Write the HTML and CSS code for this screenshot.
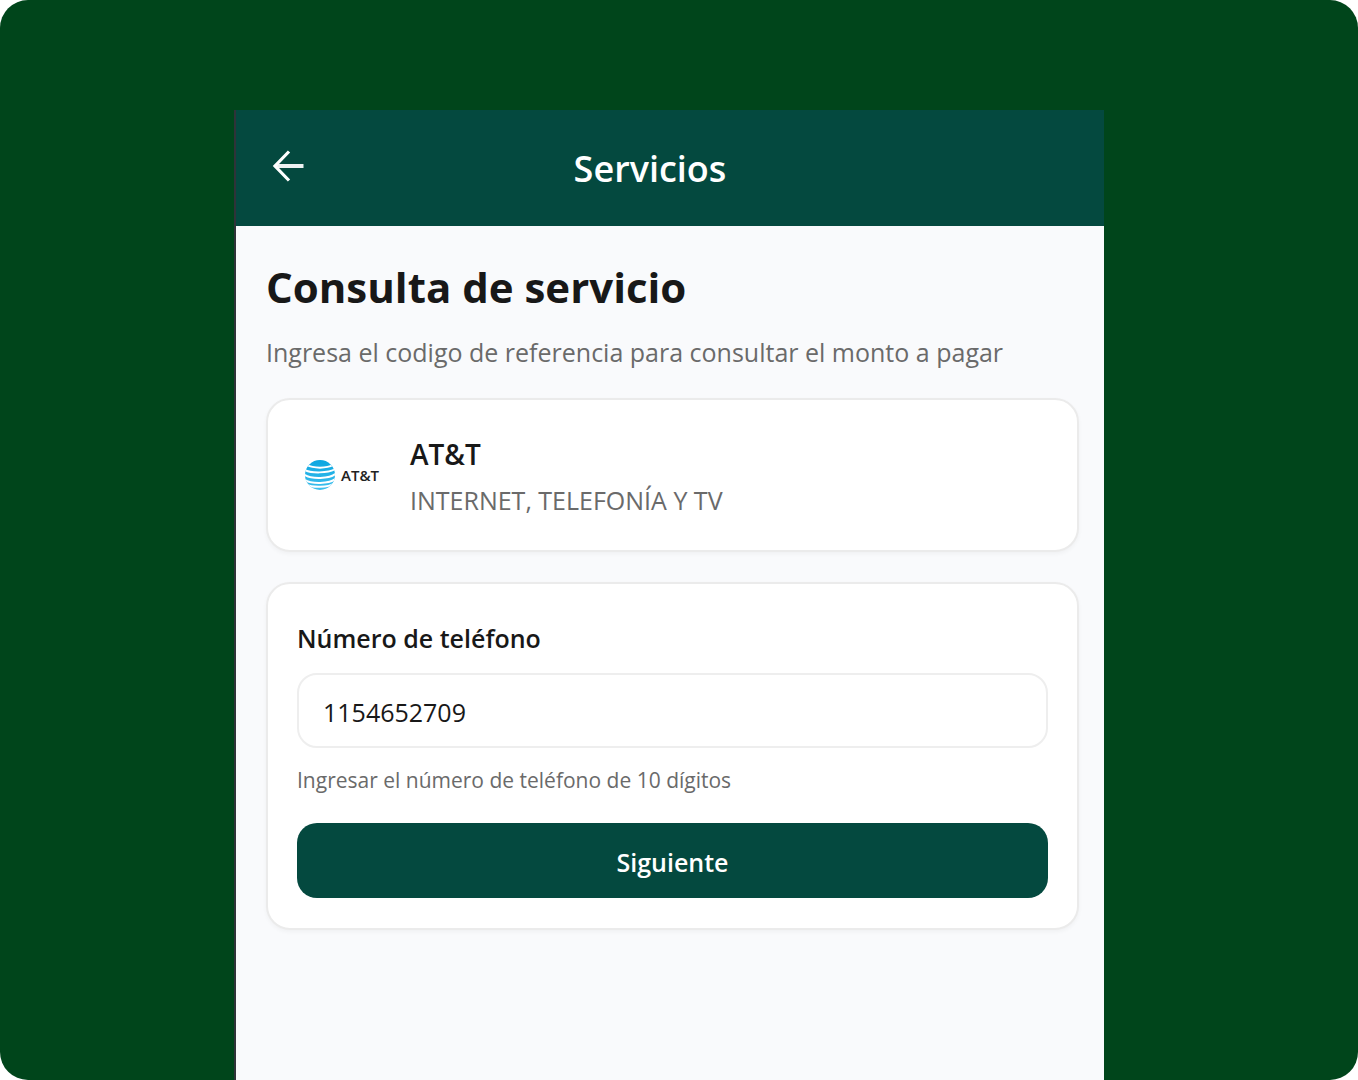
FILE: index.html
```
<!DOCTYPE html>
<html lang="es">
  <head>
    <meta charset="UTF-8" />
    <meta name="viewport" content="width=device-width, initial-scale=1.0" />
    <title>Servicios</title>
    <link rel="stylesheet" href="styles.css">
  </head>
  <body>
    <div class="stage">
      <div class="phone">
        <header class="topbar">
          <button type="button" class="back" aria-label="Volver">
            <svg width="32" height="32" viewBox="0 0 32 32" fill="none" stroke="#fff" stroke-width="3.200">
              <path d="M31.500 16H3" stroke-width="4" stroke="#edf2f2" />
              <path d="M17 1.500L3 16l14 14.500" />
            </svg>
          </button>
          <h1 class="topbar-title">Servicios</h1>
        </header>

        <main class="content">
          <h2 class="title">Consulta de servicio</h2>
          <p class="subtitle">Ingresa el codigo de referencia para consultar el monto a pagar</p>

          <section class="card company">
            <div class="logo">
              <svg width="30" height="30" viewBox="0 0 30 30" aria-hidden="true">
                <defs>
                  <linearGradient id="globe" x1="0" y1="0" x2="0" y2="1">
                    <stop offset="0" stop-color="#0aa5e0" />
                    <stop offset="1" stop-color="#3fc0ee" />
                  </linearGradient>
                  <clipPath id="round"><circle cx="15" cy="15" r="15" /></clipPath>
                </defs>
                <g clip-path="url(#round)">
                  <rect width="30" height="30" fill="url(#globe)" />
                  <g fill="none" stroke="#fff" stroke-width="2">
                    <path d="M2 5c6 3.500 20 3.500 26 0" />
                    <path d="M-1 9.500c6 4 25 4 32-1" />
                    <path d="M-1 14.500c7 5 26 4.500 32-1" />
                    <path d="M-1 19.500c7 5 26 4.500 32-1" />
                    <path d="M1 24.500c7 3.500 22 3 28-1" />
                  </g>
                </g>
              </svg>
              <span class="logo-text">AT&amp;T</span>
            </div>
            <div class="company-info">
              <h3 class="company-name">AT&amp;T</h3>
              <p class="company-type">INTERNET, TELEFONÍA Y TV</p>
            </div>
          </section>

          <form class="card query">
            <label for="phoneNumber">Número de teléfono</label>
            <input type="tel" id="phoneNumber" name="phoneNumber" value="1154652709" aria-describedby="phoneHint" />
            <p class="hint" id="phoneHint">Ingresar el número de teléfono de 10 dígitos</p>
            <button type="submit" class="next">Siguiente</button>
          </form>
        </main>
      </div>
    </div>
  </body>
</html>
```
FILE: styles.css
```
* {
  box-sizing: border-box;
}

body {
  margin: 0;
  background-color: #fff;
  color: #181818;
  font-family: "Segoe UI", "Open Sans", "Noto Sans", sans-serif;
}

h1,
h2,
h3,
p {
  margin: 0;
}

.stage {
  display: flex;
  min-height: 100vh;
  padding: 110px 254px 0 234px;
  border-radius: 28px;
  background-color: #00451b;
}

.phone {
  flex: 1;
  min-width: 0;
  border-left: 2px solid #2f3338;
  background-color: #f9fafc;
}

/* Header */
.topbar {
  display: flex;
  align-items: center;
  height: 116px;
  padding: 0 76px 0 36px;
  background-color: #04493f;
}

.back {
  display: flex;
  width: 32px;
  margin-bottom: 4px;
  padding: 0;
  border: none;
  background: none;
  cursor: pointer;
}

.topbar-title {
  flex: 1;
  padding: 2px 32px 0 0;
  color: #fff;
  font-size: 36px;
  font-weight: 600;
  line-height: 48px;
  text-align: center;
}

/* Content */
.content {
  padding: 31px 25px 32px 30px;
}

.title {
  font-size: 42px;
  font-weight: 700;
  line-height: 60px;
}

.subtitle {
  margin: 15px 0 26px;
  color: #6a6a6a;
  font-size: 25px;
  line-height: 40px;
}

.card {
  border: 2px solid #ebebeb;
  border-radius: 24px;
  background-color: #fff;
  box-shadow: 0 2px 4px rgba(0, 0, 0, 0.04);
}

.company {
  display: flex;
  align-items: flex-start;
  gap: 24px;
  margin-bottom: 30px;
  padding: 31px 30px 27px;
}

.logo {
  display: flex;
  align-items: center;
  justify-content: center;
  gap: 6px;
  width: 88px;
  height: 88px;
}

.logo-text {
  color: #222;
  font-size: 15px;
  font-weight: 600;
}

.company-name {
  font-size: 28px;
  font-weight: 600;
  line-height: 46px;
}

.company-type {
  color: #6a6a6a;
  font-size: 25px;
  line-height: 46px;
}

.query {
  display: flex;
  flex-direction: column;
  padding: 34px 29px 30px;
}

label {
  font-size: 25px;
  font-weight: 600;
  line-height: 40px;
}

input {
  width: 100%;
  height: 75px;
  margin: 15px 0 14px;
  padding: 2px 24px 0;
  border: 2px solid #eee;
  border-radius: 20px;
  background-color: #fff;
  color: #181818;
  font-family: inherit;
  font-size: 25px;
}

.hint {
  margin-bottom: 25px;
  color: #6a6a6a;
  font-size: 21px;
  line-height: 36px;
}

.next {
  height: 75px;
  padding: 2px 0 0;
  border: none;
  border-radius: 20px;
  background-color: #04493f;
  color: #fff;
  font-family: inherit;
  font-size: 25px;
  font-weight: 600;
  cursor: pointer;
}
```
